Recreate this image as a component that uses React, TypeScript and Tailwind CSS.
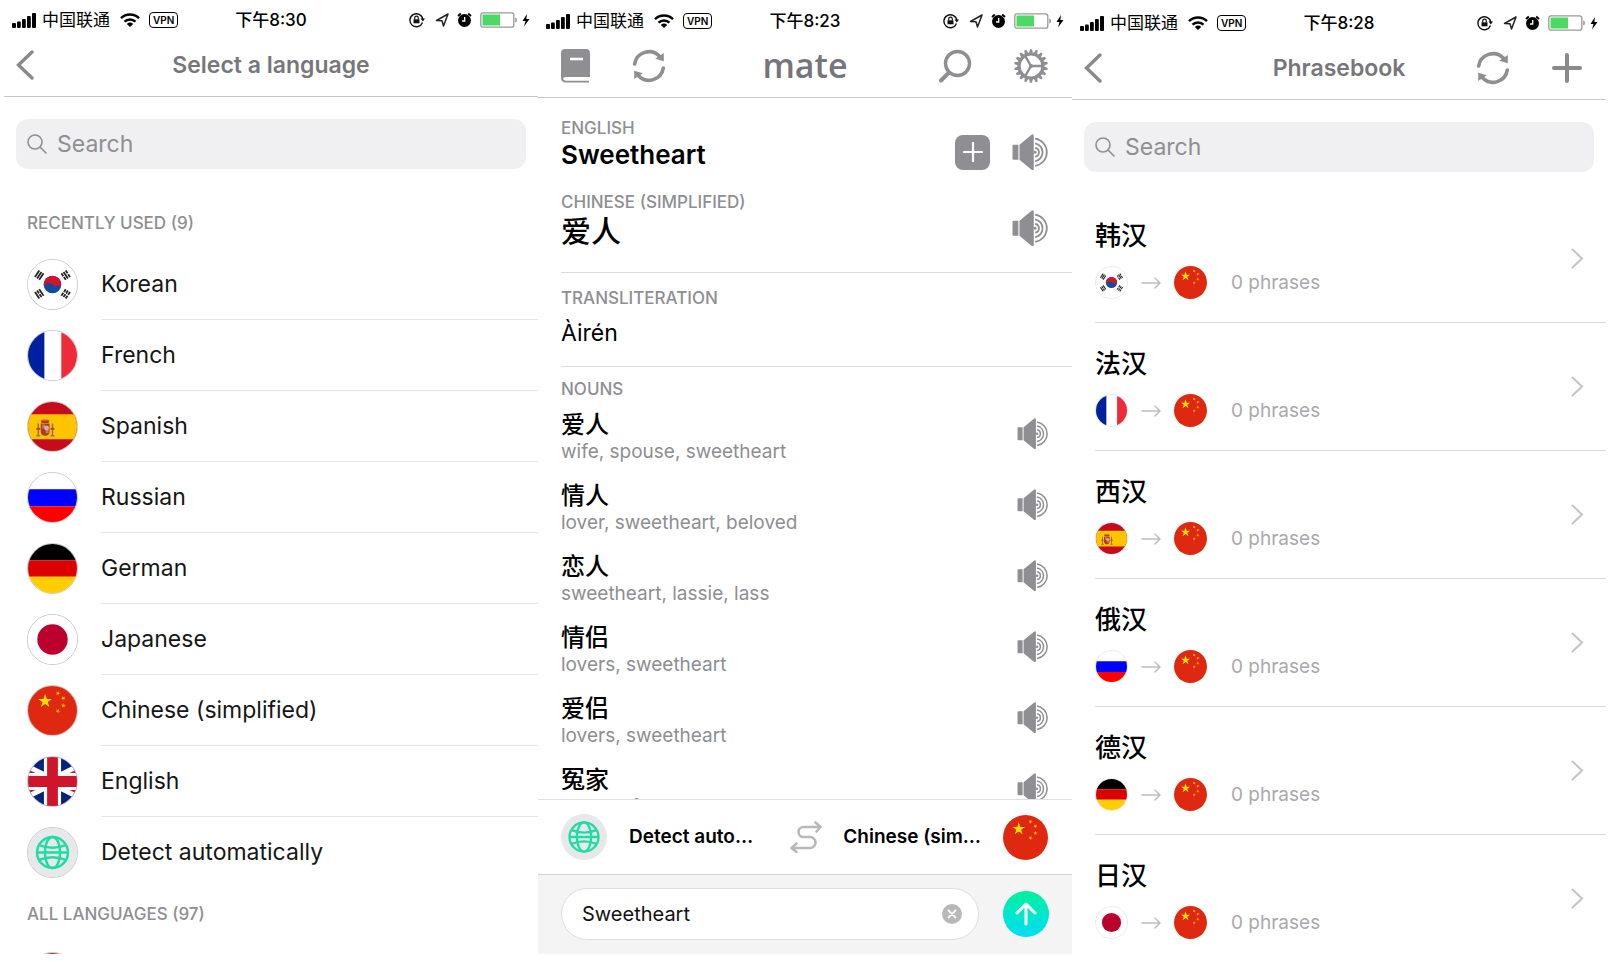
import React from 'react';

type FlagCode = 'kr' | 'fr' | 'es' | 'ru' | 'de' | 'jp' | 'cn' | 'gb' | 'za' | 'auto';

interface Language {
  code: FlagCode;
  name: string;
}

interface Noun {
  word: string;
  meanings: string;
}

interface Phrasebook {
  title: string;
  from: FlagCode;
  count: number;
}

const RECENT_LANGUAGES: Language[] = [
  { code: 'kr', name: 'Korean' },
  { code: 'fr', name: 'French' },
  { code: 'es', name: 'Spanish' },
  { code: 'ru', name: 'Russian' },
  { code: 'de', name: 'German' },
  { code: 'jp', name: 'Japanese' },
  { code: 'cn', name: 'Chinese (simplified)' },
  { code: 'gb', name: 'English' },
  { code: 'auto', name: 'Detect automatically' },
];

const NOUNS: Noun[] = [
  { word: '爱人', meanings: 'wife, spouse, sweetheart' },
  { word: '情人', meanings: 'lover, sweetheart, beloved' },
  { word: '恋人', meanings: 'sweetheart, lassie, lass' },
  { word: '情侣', meanings: 'lovers, sweetheart' },
  { word: '爱侣', meanings: 'lovers, sweetheart' },
  { word: '冤家', meanings: 'enemy, foe, sweetheart' },
];

const PHRASEBOOKS: Phrasebook[] = [
  { title: '韩汉', from: 'kr', count: 0 },
  { title: '法汉', from: 'fr', count: 0 },
  { title: '西汉', from: 'es', count: 0 },
  { title: '俄汉', from: 'ru', count: 0 },
  { title: '德汉', from: 'de', count: 0 },
  { title: '日汉', from: 'jp', count: 0 },
];

const STAR = '0,-1 0.2245,-0.309 0.9511,-0.309 0.3633,0.118 0.5878,0.809 0,0.382 -0.5878,0.809 -0.3633,0.118 -0.9511,-0.309 -0.2245,-0.309';

const Trigram: React.FC<{ x: number; y: number; angle: number; broken: boolean[] }> = ({ x, y, angle, broken }) => (
  <g transform={`translate(${x} ${y}) rotate(${angle})`} stroke="#222" strokeWidth="1.8">
    {broken.map((isBroken, i) => (
      <path key={i} d={isBroken ? `M-4 ${i * 2.6 - 2.6}h3.5M0.5 ${i * 2.6 - 2.6}h3.5` : `M-4 ${i * 2.6 - 2.6}h8`} />
    ))}
  </g>
);

const flagArt: Record<FlagCode, React.ReactNode> = {
  kr: (
    <>
      <path fill="#fff" d="M0 0h50v50H0z" />
      <circle cx="25" cy="25" r="9" fill="#0f4c9c" />
      <path fill="#d2152b" d="M16.2 27A9 9 0 0 1 33.9 23.5C32.500 28 28 27.500 25 25C22 22.500 18 23 16.2 27z" />
      <Trigram x={11.5} y={15.5} angle={-56} broken={[false, false, false]} />
      <Trigram x={38.5} y={15.5} angle={56} broken={[true, false, true]} />
      <Trigram x={11.5} y={34.5} angle={56} broken={[false, true, false]} />
      <Trigram x={38.5} y={34.5} angle={-56} broken={[true, true, true]} />
    </>
  ),
  fr: (
    <>
      <path fill="#fff" d="M0 0h50v50H0z" />
      <path fill="#00209f" d="M0 0h16.7v50H0z" />
      <path fill="#ee2b3b" d="M34 0h16v50H34z" />
    </>
  ),
  es: (
    <>
      <path fill="#c60b1e" d="M0 0h50v50H0z" />
      <path fill="#ffc400" d="M0 12.5h50v25.5H0z" />
      <path fill="#ad3a22" d="M13 18.5h9l-1 3h-7zM13 22h9v8q0 4-4.500 4.500q-4.500-.5-4.500-4.500z" />
      <path fill="#c8823c" d="M14.500 23h3v4h-3zM18 28h3v4h-3zM15 17.500h5v1.500h-5z" />
      <circle cx="19" cy="26.500" r="2.500" fill="#d9a7c4" />
      <path stroke="#a0703c" strokeWidth="1.6" d="M10.500 22v12M25 22v12" />
      <path stroke="#ad3a22" strokeWidth="1.4" d="M8.500 28q2-2 4 0M23 28q2-2 4 0" fill="none" />
      <path stroke="#8a7a50" strokeWidth="1.4" d="M8.500 34.500h4M23 34.500h4" />
    </>
  ),
  ru: (
    <>
      <path fill="#fff" d="M0 0h50v50H0z" />
      <path fill="#0000fe" d="M0 16.500h50v17.500H0z" />
      <path fill="#fe0000" d="M0 34h50v16H0z" />
    </>
  ),
  de: (
    <>
      <path fill="#000" d="M0 0h50v16.500H0z" />
      <path fill="#dd0000" d="M0 16.500h50v17H0z" />
      <path fill="#ffce00" d="M0 33.500h50V50H0z" />
    </>
  ),
  jp: (
    <>
      <path fill="#fff" d="M0 0h50v50H0z" />
      <circle cx="25" cy="25" r="15.500" fill="#bc002d" />
    </>
  ),
  cn: (
    <>
      <path fill="#de2910" d="M0 0h50v50H0z" />
      <g fill="#ffde00">
        <polygon points={STAR} transform="translate(17.500 15.500) scale(7.400)" />
        <g fill="#f9b511">
          <polygon points={STAR} transform="translate(30.500 7.500) rotate(25) scale(2.600)" />
          <polygon points={STAR} transform="translate(36 12.500) rotate(45) scale(2.600)" />
          <polygon points={STAR} transform="translate(36 20) scale(2.600)" />
          <polygon points={STAR} transform="translate(30.500 25.500) rotate(25) scale(2.600)" />
        </g>
      </g>
    </>
  ),
  gb: (
    <>
      <path fill="#00247d" d="M0 0h50v50H0z" />
      <path stroke="#fff" strokeWidth="10" d="M-25 0L75 50M-25 50L75 0" />
      <path stroke="#cf142b" strokeWidth="3" d="M-25 1.800L25 26.800M75 48.200L25 23.200M-25 48.200L25 23.200M75 1.800L25 26.800" />
      <path stroke="#fff" strokeWidth="17.500" d="M25 0v50M0 25h50" />
      <path stroke="#cf142b" strokeWidth="11" d="M25 0v50M0 25h50" />
    </>
  ),
  za: (
    <>
      <path fill="#fff" d="M0 0h50v50H0z" />
      <path fill="#b5383c" d="M0 0h50v16H0z" />
      <path fill="#00209f" d="M0 34h50v16H0z" />
    </>
  ),
  auto: (
    <>
      <path fill="#e8e8ea" d="M0 0h50v50H0z" />
      <g fill="none" stroke="#1edda4" strokeWidth="2.500">
        <circle cx="25" cy="25" r="15.800" />
        <ellipse cx="25" cy="25" rx="7.800" ry="15.800" />
        <path d="M9 25h32M11.500 17.500q13.500 5.500 27 0M11.500 32.500q13.500-5.500 27 0" />
      </g>
    </>
  ),
};

const Flag: React.FC<{ code: FlagCode; className: string }> = ({ code, className }) => (
  <span className={`block shrink-0 overflow-hidden rounded-full ${className}`}>
    <svg viewBox="0 0 50 50" className="block h-full w-full" aria-hidden="true">
      {flagArt[code]}
    </svg>
  </span>
);

const SyncIcon = () => (
  <svg viewBox="-17 -17 34 34" className="size-[34px] text-[#8e8e93]" fill="none" aria-hidden="true">
    <path d="M-14.300 -2A14.500 14.500 0 0 1 10.500 -9.800M14.300 2A14.500 14.500 0 0 1 -10.500 9.800" stroke="currentColor" strokeWidth="3.600" strokeLinecap="round" />
    <path d="M14.800 -13v8.200l-8.600 -2.400zM-14.800 13v-8.200l8.600 2.400z" fill="currentColor" />
  </svg>
);

const BookIcon = () => (
  <svg viewBox="0 0 29 34" className="h-[34px] w-[29px]" fill="none" aria-hidden="true">
    <path d="M4 0h21a4 4 0 0 1 4 4v24H5q-2.500 0-2.500 1.800T5 31.500h23v2H5Q0 33.500 0 28.500V4a4 4 0 0 1 4-4z" fill="#8e8e93" />
    <path d="M2.300 28.800h26.700v2.700H4.500q-2.200-.2-2.200-1.500z" fill="#fff" />
    <path d="M9 10h13" stroke="#fff" strokeWidth="2.600" />
  </svg>
);

const MagnifierIcon = () => (
  <svg viewBox="0 0 34 34" className="size-[34px]" fill="none" stroke="#8e8e93" aria-hidden="true">
    <circle cx="19.500" cy="14.500" r="12" strokeWidth="3.400" />
    <path d="M11 23.500L3 31.500" strokeWidth="4" strokeLinecap="round" />
  </svg>
);

const GearIcon = () => (
  <svg viewBox="-17 -17 34 34" className="size-[34px]" fill="none" stroke="#8e8e93" aria-hidden="true">
    <circle r="12" strokeWidth="3.200" />
    {Array.from({ length: 18 }, (_, i) => (
      <path key={i} d="M-1.900 -13L-1 -16.800H1L1.900 -13z" fill="#8e8e93" stroke="none" transform={`rotate(${i * 20})`} />
    ))}
    <path d="M0 0H12M0 0L-6 -10.400M0 0L-6 10.400" strokeWidth="2.400" />
    <circle r="2" fill="#8e8e93" stroke="none" />
  </svg>
);

const SpeakerIcon: React.FC<{ className: string }> = ({ className }) => (
  <svg viewBox="0 0 37 35" className={className} fill="none" aria-hidden="true">
    <path d="M1.500 10.500h4.700v14.500H1.500q-1 0-1-1v-12.500q0-1 1-1zM7.300 10.500L19 .8q2.200-1.600 2.200 1v31.900q0 2.600-2.200 1L7.300 25z" fill="#8e8e93" />
    <path d="M22.500 4.500a13.400 13.400 0 0 1 0 26.500M22.500 9a8.900 8.900 0 0 1 0 17.500M22.500 13.400a4.400 4.400 0 0 1 0 8.700" stroke="#8e8e93" strokeWidth="1.700" />
    <circle cx="22.500" cy="17.800" r="1.400" fill="#8e8e93" />
  </svg>
);

const SpeakButton: React.FC<{ label: string; small?: boolean }> = ({ label, small }) => (
  <button type="button" aria-label={`Listen to ${label}`} className="block">
    <SpeakerIcon className={small ? 'block h-[31px] w-[33px]' : 'block h-9 w-[38px]'} />
  </button>
);

const BackButton = () => (
  <button type="button" aria-label="Back">
    <svg viewBox="0 0 18 30" className="h-[30px] w-[18px]" fill="none" stroke="#8a8a8d" strokeWidth="3.400" aria-hidden="true">
      <path d="M16 2L2.500 15L16 28" strokeLinecap="round" />
    </svg>
  </button>
);

const StatusBar: React.FC<{ time: string }> = ({ time }) => (
  <div className="grid h-9 shrink-0 grid-cols-[1fr_auto_1fr] items-center px-2 pt-1 text-[17px] leading-6 text-black">
    <div className="flex items-center">
      <svg viewBox="0 0 24 15" className="h-[15px] w-6" aria-hidden="true">
        <path d="M0 11q0-1 1-1h2q1 0 1 1v3q0 1-1 1H1q-1 0-1-1zM5 9.500q0-1 1-1h1.800q1 0 1 1V14q0 1-1 1H6q-1 0-1-1zM10 7q0-1 1-1h1.800q1 0 1 1v7q0 1-1 1H11q-1 0-1-1zM15 4q0-1 1-1h1.800q1 0 1 1v10q0 1-1 1H16q-1 0-1-1zM20 1q0-1 1-1h2q1 0 1 1v13q0 1-1 1h-2q-1 0-1-1z" />
      </svg>
      <span className="ml-1.5">中国联通</span>
      <svg viewBox="0 0 20 14" className="ml-2.5 h-[14px] w-5" fill="none" stroke="#000" strokeWidth="2.500" aria-hidden="true">
        <path d="M1 5.200a13 13 0 0 1 18 0M4.500 8.700a8 8 0 0 1 11 0" />
        <path d="M10 14L6.800 10.900a4.600 4.600 0 0 1 6.400 0z" fill="#000" stroke="none" />
      </svg>
      <span className="ml-[9px] flex h-4 items-center rounded-[4px] border border-black px-[3px] text-[10px] font-semibold">VPN</span>
    </div>
    <span className="font-medium">{time}</span>
    <div className="flex items-center justify-end">
      <svg viewBox="0 0 16 16" className="size-4" fill="none" stroke="#111" aria-hidden="true">
        <path d="M13.500 10.500A6.500 6.500 0 1 1 13.800 7" strokeWidth="1.400" />
        <path d="M11.500 6.500h4.500l-2.200 3z" fill="#111" stroke="none" />
        <path d="M4.500 7.300h6v4h-6z" fill="#111" stroke="none" />
        <path d="M5.700 7.500V6a1.800 1.800 0 0 1 3.600 0v1.500" strokeWidth="1.200" />
      </svg>
      <svg viewBox="0 0 14 14" className="ml-2.5 size-[14px]" fill="none" stroke="#222" strokeWidth="1.500" strokeLinejoin="round" aria-hidden="true">
        <path d="M13 1L1.500 7.500L7 7.800L8.500 13z" />
      </svg>
      <svg viewBox="0 0 15 16" className="ml-2 h-4 w-[15px]" aria-hidden="true">
        <circle cx="7.500" cy="8.500" r="6.500" />
        <path d="M1 4L3.800 1.500M14 4L11.200 1.500" stroke="#000" strokeWidth="1.800" />
        <path d="M7.700 5v4H5" stroke="#fff" strokeWidth="1.300" fill="none" />
      </svg>
      <svg viewBox="0 0 50 16" className="ml-2 h-4 w-[50px]" fill="none" aria-hidden="true">
        <rect x=".8" y=".8" width="33" height="14.400" rx="2.200" stroke="#9a9a9a" strokeWidth="1.300" />
        <rect x="2.500" y="2.500" width="17.500" height="11" rx=".5" fill="#4cd964" />
        <path d="M35.200 5.500q1.800 0 1.800 2.500t-1.800 2.500z" fill="#9a9a9a" />
        <path d="M47 2L42.500 9h3l-1.500 5.500 5.500-7.500h-3.200z" fill="#000" />
      </svg>
    </div>
  </div>
);

const Header: React.FC<{ left: React.ReactNode; right?: React.ReactNode; children: React.ReactNode }> = ({ left, right, children }) => (
  <header className="grid h-[61px] shrink-0 grid-cols-[1fr_auto_1fr] items-center border-b border-[#c9c9cb] pb-0.5">
    <div className="flex items-center gap-[42px] pl-3">{left}</div>
    {children}
    <div className="flex items-center justify-end gap-[42px] pr-6">{right}</div>
  </header>
);

const SearchBox: React.FC<{ id: string }> = ({ id }) => (
  <div className="mx-3 mt-[22px] flex h-[50px] shrink-0 items-center rounded-xl bg-[#f0f0f2] px-[11px]">
    <label htmlFor={id} aria-label="Search">
      <svg viewBox="0 0 20 20" className="size-5" fill="none" stroke="#8e8e93" strokeWidth="1.600" aria-hidden="true">
        <circle cx="8" cy="8" r="7" />
        <path d="M13 13l6 6" strokeLinecap="round" />
      </svg>
    </label>
    <input id={id} type="search" placeholder="Search" className="ml-2.5 w-full min-w-0 bg-transparent text-[23px] outline-none placeholder:text-[#8e8e93]" />
  </div>
);

const SmallCaps: React.FC<{ children: React.ReactNode }> = ({ children }) => (
  <p className="text-[17px] font-medium leading-5 text-[#8e8e93]">{children}</p>
);

const LanguageRow: React.FC<{ language: Language; last?: boolean }> = ({ language, last }) => (
  <li>
    <button type="button" className="flex h-[71px] w-full items-center gap-[23px] pl-[23px] text-left">
      <Flag code={language.code} className="size-[51px] border border-[#c8c8cb]" />
      <span className={`flex h-full flex-1 items-center text-[23px] text-[#161616] ${last ? '' : 'border-b border-[#e6e6e8]'}`}>{language.name}</span>
    </button>
  </li>
);

const LanguageScreen = () => (
  <section className="flex min-w-0 flex-1 flex-col overflow-hidden">
    <StatusBar time="下午8:30" />
    <Header left={<BackButton />}>
      <h1 className="text-[23px] font-semibold text-[#77777b]">Select a language</h1>
    </Header>
    <SearchBox id="language-search" />
    <div className="px-[23px] pb-4 pt-11">
      <SmallCaps>RECENTLY USED (9)</SmallCaps>
    </div>
    <ul>
      {RECENT_LANGUAGES.map((language, index) => (
        <LanguageRow key={language.code} language={language} last={index === RECENT_LANGUAGES.length - 1} />
      ))}
    </ul>
    <div className="px-[23px] pb-[18px] pt-4">
      <SmallCaps>ALL LANGUAGES (97)</SmallCaps>
    </div>
    <ul>
      <LanguageRow language={{ code: 'za', name: 'Afrikaans' }} />
    </ul>
  </section>
);

const TranslateScreen = () => (
  <section className="flex min-w-0 flex-1 flex-col overflow-hidden pt-px">
    <StatusBar time="下午8:23" />
    <Header
      left={
        <>
          <button type="button" aria-label="Phrasebook" className="ml-[11px]"><BookIcon /></button>
          <button type="button" aria-label="Sync"><SyncIcon /></button>
        </>
      }
      right={
        <>
          <button type="button" aria-label="Search"><MagnifierIcon /></button>
          <button type="button" aria-label="Settings"><GearIcon /></button>
        </>
      }
    >
      <h1 className="pb-0.5 font-['Open_Sans'] text-[34px] font-semibold leading-10 text-[#75757a]">mate</h1>
    </Header>

    <div className="min-h-0 flex-1 overflow-hidden pl-[23px]">
      <div className="border-b border-[#dcdcde] pb-[22px] pr-[22px] pt-5">
        <div className="flex items-end justify-between">
          <div>
            <SmallCaps>ENGLISH</SmallCaps>
            <p className="text-[26px] font-semibold leading-[34px] text-black">Sweetheart</p>
          </div>
          <div className="flex items-center gap-[22px] pb-0.5">
            <button type="button" aria-label="Add to phrasebook" className="flex size-[35px] items-center justify-center rounded-lg bg-[#8e8e93]">
              <svg viewBox="0 0 20 20" className="size-5" stroke="#fff" strokeWidth="2.200" strokeLinecap="round" aria-hidden="true">
                <path d="M10 1v18M1 10h18" />
              </svg>
            </button>
            <SpeakButton label="Sweetheart" />
          </div>
        </div>
        <div className="mt-5 flex items-end justify-between">
          <div>
            <SmallCaps>CHINESE (SIMPLIFIED)</SmallCaps>
            <p className="text-3xl font-medium leading-[38px] text-black">爱人</p>
          </div>
          <div className="pb-1">
            <SpeakButton label="爱人" />
          </div>
        </div>
      </div>
      <div className="border-b border-[#dcdcde] pb-[18px] pt-[15px]">
        <SmallCaps>TRANSLITERATION</SmallCaps>
        <p className="mt-2.5 text-[23px] leading-[30px] text-black">Àirén</p>
      </div>
      <div className="pr-[22px] pt-3">
        <SmallCaps>NOUNS</SmallCaps>
        <ul className="mt-3">
          {NOUNS.map((noun) => (
            <li key={noun.word} className="flex h-[71px] items-start justify-between">
              <div>
                <p className="text-2xl font-medium leading-7 text-black">{noun.word}</p>
                <p className="text-[19px] leading-[26px] text-[#8e8e93]">{noun.meanings}</p>
              </div>
              <div className="flex h-11 items-center">
                <SpeakButton label={noun.word} small />
              </div>
            </li>
          ))}
        </ul>
      </div>
    </div>

    <footer className="shrink-0 border-t border-[#e0e0e2]">
      <div className="flex h-[74px] items-center justify-between pl-[23px] pr-6 text-[19px] font-semibold text-black">
        <button type="button" className="flex items-center gap-[22px]">
          <Flag code="auto" className="size-[46px]" />
          Detect auto…
        </button>
        <button type="button" aria-label="Swap languages" className="ml-4">
          <svg viewBox="0 0 32 32" className="block size-8" fill="none" stroke="#b9b9bc" strokeWidth="2.600" strokeLinecap="round" strokeLinejoin="round" aria-hidden="true">
            <path d="M29 6H13.500a5 5 0 0 0 0 10H20a5.500 5.500 0 0 1 0 11H3M25.500 1.500L30.500 6L26.500 10.500M6.500 22.500L1.500 27L6.500 31" />
          </svg>
        </button>
        <button type="button" className="flex items-center gap-[22px]">
          Chinese (sim…
          <Flag code="cn" className="size-[45px]" />
        </button>
      </div>
      <form className="flex h-20 items-center gap-6 border-t border-[#d4d4d6] bg-[#f4f4f5] px-[23px] pb-0.5">
        <div className="flex h-[52px] flex-1 items-center rounded-full border border-[#dedee0] bg-white pl-5 pr-4">
          <input type="text" aria-label="Text to translate" defaultValue="Sweetheart" className="w-full min-w-0 bg-transparent text-[20px] text-[#111] outline-none" />
          <button type="button" aria-label="Clear text">
            <svg viewBox="0 0 20 20" className="block size-5" aria-hidden="true">
              <circle cx="10" cy="10" r="10" fill="#b8b8ba" />
              <path d="M6.500 6.500l7 7M13.500 6.500l-7 7" stroke="#fff" strokeWidth="1.800" strokeLinecap="round" />
            </svg>
          </button>
        </div>
        <button type="submit" aria-label="Translate" className="flex size-[46px] items-center justify-center rounded-full bg-linear-to-b from-[#00f19a] to-[#00dcf5]">
          <svg viewBox="0 0 22 24" className="h-6 w-[22px]" fill="none" stroke="#fff" strokeWidth="3" strokeLinecap="round" strokeLinejoin="round" aria-hidden="true">
            <path d="M11 22V2M2 11L11 2l9 9" />
          </svg>
        </button>
      </form>
    </footer>
  </section>
);

const PhrasebookScreen = () => (
  <section className="flex min-w-0 flex-1 flex-col overflow-hidden pt-[3px]">
    <StatusBar time="下午8:28" />
    <Header
      left={<BackButton />}
      right={
        <>
          <button type="button" aria-label="Sync"><SyncIcon /></button>
          <button type="button" aria-label="Add phrasebook">
            <svg viewBox="0 0 30 30" className="size-[30px]" stroke="#8a8a8d" strokeWidth="4" strokeLinecap="round" aria-hidden="true">
              <path d="M15 2v26M2 15h26" />
            </svg>
          </button>
        </>
      }
    >
      <h1 className="text-[23px] font-semibold text-[#77777b]">Phrasebook</h1>
    </Header>
    <SearchBox id="phrase-search" />
    <ul className="pl-[23px] pt-[23px]">
      {PHRASEBOOKS.map((book) => (
        <li key={book.title} className="border-b border-[#dcdcde]">
          <button type="button" className="flex h-[127px] w-full items-center justify-between pr-[22px] text-left">
            <span className="flex flex-col gap-3.5 pt-0.5">
              <span className="text-[26px] font-medium leading-8 text-black">{book.title}</span>
              <span className="flex items-center">
                <Flag code={book.from} className="size-[33px] border border-[#e6e6e8]" />
                <svg viewBox="0 0 20 12" className="mx-[13px] h-3 w-5" fill="none" stroke="#c0c0c3" strokeWidth="1.600" strokeLinecap="round" strokeLinejoin="round" aria-hidden="true">
                  <path d="M1 6h18M14 1l5 5-5 5" />
                </svg>
                <Flag code="cn" className="size-[33px]" />
                <span className="ml-6 text-[19px] leading-6 text-[#a9a9ad]">{book.count} phrases</span>
              </span>
            </span>
            <svg viewBox="0 0 13 21" className="h-[21px] w-[13px]" fill="none" stroke="#c4c4c7" strokeWidth="2" strokeLinecap="round" aria-hidden="true">
              <path d="M1.500 1.500L11 10.500L1.500 19.500" />
            </svg>
          </button>
        </li>
      ))}
    </ul>
  </section>
);

export default function App() {
  return (
    <main className="flex h-screen bg-white px-1 pb-2 font-[Inter,'Noto_Sans_CJK_SC',sans-serif]">
      <LanguageScreen />
      <TranslateScreen />
      <PhrasebookScreen />
    </main>
  );
}
